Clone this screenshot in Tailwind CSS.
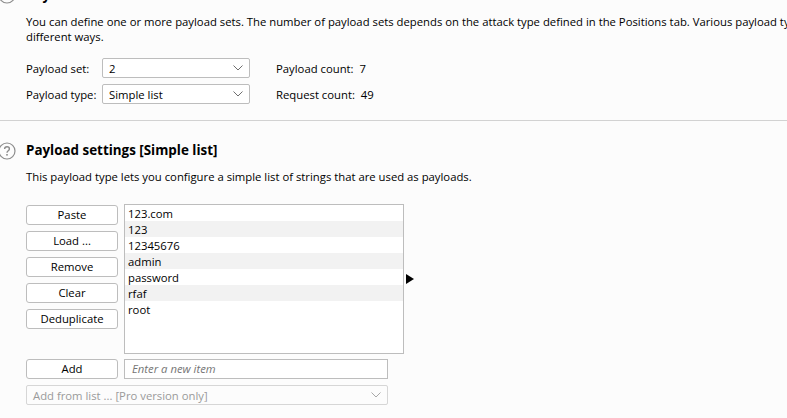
<!DOCTYPE html>
<html lang="en">
<head>
    <meta charset="UTF-8">
    <title>Payload settings</title>
    <script src="https://cdn.jsdelivr.net/npm/@tailwindcss/browser@4"></script>
</head>
<body class="bg-[#fcfcfc] h-[418px] overflow-hidden font-['Open_Sans',sans-serif] text-[11.3px] leading-[16px] text-black">
    <div class="w-[787px] h-[418px] overflow-hidden">
        <!-- payload sets section, scrolled partly out of view -->
        <div class="-mt-[15px] h-[136px] border-b border-[#d2d2d2] relative">
            <div class="flex items-center h-[20px]">
                <svg class="w-[18px] h-[18px] shrink-0 -ml-[2px]" viewBox="0 0 18 18" fill="none"><circle cx="9" cy="9" r="8" stroke="#8c8c8c" stroke-width="1.2"/></svg>
                <h2 class="ml-[10px] font-bold text-[13.4px] whitespace-nowrap">Payload sets</h2>
            </div>
            <p class="ml-[26px] mt-[9px] w-[800px] whitespace-nowrap leading-[15px]">You can define one or more payload sets. The number of payload sets depends on the attack type defined in the Positions tab. Various payload types are available for each payload set, and each payload type can be customized in</p>
            <p class="ml-[26px] leading-[15px]">different ways.</p>
            <div class="ml-[26px] mt-[14px] grid grid-cols-[76px_148px_auto] gap-y-[6px] items-center">
                <span class="pt-[1px]">Payload set:</span>
                <div class="h-[20px] border border-[#bdbdbd] rounded-[2px] bg-white flex items-center justify-between pl-[6px] pr-[6px]">
                    <span class="pt-[1px]">2</span>
                    <svg class="w-[10px] h-[6px]" viewBox="0 0 10 6" fill="none"><path d="M.5.5 5 5 9.5.5" stroke="#6e6e6e"/></svg>
                </div>
                <span class="ml-[26px] pt-[1px]">Payload count:&nbsp; 7</span>
                <span class="pt-[1px]">Payload type:</span>
                <div class="h-[20px] border border-[#bdbdbd] rounded-[2px] bg-white flex items-center justify-between pl-[6px] pr-[6px]">
                    <span class="pt-[1px]">Simple list</span>
                    <svg class="w-[10px] h-[6px]" viewBox="0 0 10 6" fill="none"><path d="M.5.5 5 5 9.5.5" stroke="#6e6e6e"/></svg>
                </div>
                <span class="ml-[26px] pt-[1px]">Request count:&nbsp; 49</span>
            </div>
        </div>

        <!-- payload settings -->
        <div class="flex items-center h-[20px] mt-[20px]">
            <svg class="w-[18px] h-[18px] shrink-0 -ml-[2px]" viewBox="0 0 18 18" fill="none">
                <circle cx="9" cy="9" r="8" stroke="#8c8c8c" stroke-width="1.2"/>
                <path d="M6.6 7.1c0-1.4 1.1-2.3 2.4-2.3s2.4.9 2.4 2.1c0 1.9-2.4 1.8-2.4 3.8" stroke="#8c8c8c" stroke-width="1.4"/>
                <rect x="8.2" y="12" width="1.6" height="1.6" fill="#8c8c8c"/>
            </svg>
            <h2 class="ml-[10px] pb-[2px] font-bold text-[13.4px] whitespace-nowrap">Payload settings [Simple list]</h2>
        </div>
        <p class="ml-[26px] mt-[8px]">This payload type lets you configure a simple list of strings that are used as payloads.</p>

        <div class="ml-[26px] mt-[19px] flex gap-[6px] items-start">
            <div class="flex flex-col gap-[6px] w-[92px] pt-[1px]">
                <button class="h-[20px] border border-[#bdbdbd] rounded-[3px] bg-white">Paste</button>
                <button class="h-[20px] border border-[#bdbdbd] rounded-[3px] bg-white">Load ...</button>
                <button class="h-[20px] border border-[#bdbdbd] rounded-[3px] bg-white">Remove</button>
                <button class="h-[20px] border border-[#bdbdbd] rounded-[3px] bg-white">Clear</button>
                <button class="h-[20px] border border-[#bdbdbd] rounded-[3px] bg-white">Deduplicate</button>
            </div>
            <ul class="w-[280px] h-[150px] border border-[#bdbdbd] bg-white">
                <li class="h-[16px] pl-[3px] pt-[1px] leading-[15px]">123.com</li>
                <li class="h-[16px] pl-[3px] pt-[1px] leading-[15px] bg-[#f2f2f2]">123</li>
                <li class="h-[16px] pl-[3px] pt-[1px] leading-[15px]">12345676</li>
                <li class="h-[16px] pl-[3px] pt-[1px] leading-[15px] bg-[#f2f2f2]">admin</li>
                <li class="h-[16px] pl-[3px] pt-[1px] leading-[15px]">password</li>
                <li class="h-[16px] pl-[3px] pt-[1px] leading-[15px] bg-[#f2f2f2]">rfaf</li>
                <li class="h-[16px] pl-[3px] pt-[1px] leading-[15px]">root</li>
            </ul>
            <svg class="w-[8px] h-[10px] mt-[70px] -ml-[4px]" viewBox="0 0 8 10"><path d="M0 0 8 5 0 10z" fill="#000"/></svg>
        </div>

        <div class="ml-[26px] mt-[5px] w-[362px] flex flex-col gap-[6px]">
            <div class="flex gap-[6px]">
                <button class="w-[92px] h-[20px] border border-[#bdbdbd] rounded-[3px] bg-white">Add</button>
                <div class="flex-1 h-[20px] border border-[#bdbdbd] bg-white pl-[7px] flex items-center italic text-[#757575]">Enter a new item</div>
            </div>
            <div class="h-[20px] border border-[#d6d6d6] rounded-[2px] flex items-center justify-between pl-[6px] pr-[6px] text-[#9a9a9a]">
                <span class="pt-[1px]">Add from list ... [Pro version only]</span>
                <svg class="w-[10px] h-[6px]" viewBox="0 0 10 6" fill="none"><path d="M.5.5 5 5 9.5.5" stroke="#a8a8a8"/></svg>
            </div>
        </div>
    </div>
</body>
</html>
